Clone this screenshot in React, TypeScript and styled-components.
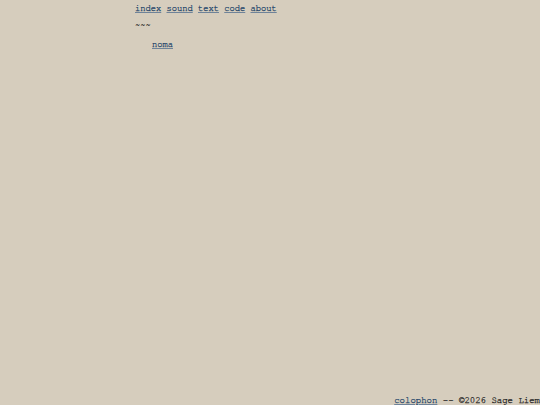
import React from "react";
import styled, { createGlobalStyle } from "styled-components";

const Global = createGlobalStyle`
  html, body { margin: 0; padding: 0; background: #d6cdbd; }
  body {
    font-family: FreeMono, "Liberation Mono", monospace;
    font-size: 8.75px;
    color: #1e1e1e;
    -webkit-text-stroke: 0.25px currentColor;
  }
`;

const Page = styled.div`
  min-height: 100vh;
  display: flex;
  flex-direction: column;
  box-sizing: border-box;
`;

const Column = styled.main`
  width: 50%;
  margin: 0 auto;
  flex: 1;
`;

const Nav = styled.nav`
  padding-top: 1px;
  line-height: 15px;
  white-space: pre;
`;

const Link = styled.a`
  color: #24456a;
  text-decoration: underline;
  text-decoration-color: #6f8399;
  text-underline-offset: 1px;
`;

const Divider = styled.p`
  margin: 2px 0 0;
  line-height: 15px;
`;

const List = styled.ul`
  list-style: none;
  margin: 4px 0 0;
  padding: 0 0 0 17px;
  line-height: 15px;
`;

const Footer = styled.footer`
  text-align: right;
  font-size: 9px;
  line-height: 9px;
  white-space: pre;
`;

const navItems = ["index", "sound", "text", "code", "about"];

export default function App() {
  return (
    <>
      <Global />
      <Page>
        <Column>
          <Nav>
            {navItems.map((n, i) => (
              <React.Fragment key={n}>
                <Link href="#">{n}</Link>
                {i < navItems.length - 1 ? " " : ""}
              </React.Fragment>
            ))}
          </Nav>
          <Divider>~~~</Divider>
          <List>
            <li><Link href="#">noma</Link></li>
          </List>
        </Column>
        <Footer>
          <Link href="#">colophon</Link> -- ©2026 Sage Liem
        </Footer>
      </Page>
    </>
  );
}
